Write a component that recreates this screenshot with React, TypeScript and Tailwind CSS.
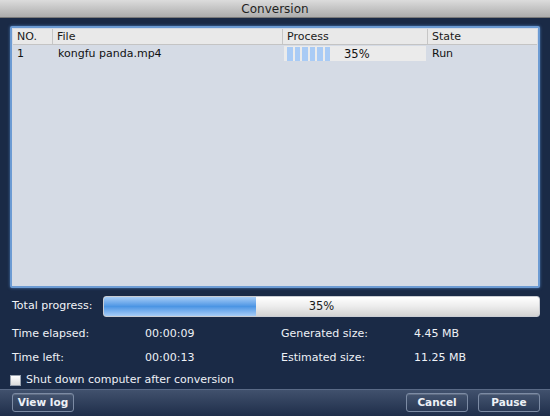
import React from "react";

type Job = { no: number; file: string; progress: number; state: string };

const jobs: Job[] = [{ no: 1, file: "kongfu panda.mp4", progress: 35, state: "Run" }];

const Segments = ({ value }: { value: number }) => {
  const count = Math.round((value / 100) * 17);
  return (
    <div className="flex h-full items-center gap-[2px] pl-[3px]">
      {Array.from({ length: count }).map((_, i) => (
        <div key={i} className="h-[14px] w-[5.5px] bg-[#a9cbf5]" />
      ))}
    </div>
  );
};

const Button = ({ label }: { label: string }) => (
  <button className="h-[19px] w-[62px] rounded-[3px] border border-[#7c8ba4] bg-gradient-to-b from-[#44546f] to-[#2a3955] text-[10.5px] font-bold text-[#eef1f6] shadow-[inset_0_1px_0_rgba(255,255,255,0.15)]">
    {label}
  </button>
);

const Stat = ({ label, value }: { label: string; value: string }) => (
  <div className="flex">
    <span className="w-[133px]">{label}</span>
    <span>{value}</span>
  </div>
);

export default function App() {
  const total = 35;
  return (
    <div className="flex h-[416px] w-[550px] flex-col overflow-hidden bg-[#1a2a46] font-['DejaVu_Sans',sans-serif] text-[11px]">
      {/* title bar */}
      <div className="flex h-[18px] items-center justify-center border-b border-[#7a7a7a] bg-gradient-to-b from-[#dcdcdc] to-[#adadad] text-[12px] text-[#1f1f1f]">
        Conversion
      </div>

      <div className="flex flex-1 flex-col px-[10px] pt-[8px]">
        {/* job list */}
        <div className="h-[262px] rounded-[2px] border-2 border-[#6c9bd3] bg-[#d5dbe5] p-[1px] shadow-[0_0_3px_#4a7ab8]">
          <div className="flex h-[16px] border-b border-[#c4c4c4] bg-[#e9e9e9] text-[#1a1a1a]">
            <div className="w-[40px] border-r border-[#c6c6c6] pl-[4px] leading-[16px]">NO.</div>
            <div className="w-[230px] border-r border-[#c6c6c6] pl-[4px] leading-[16px]">File</div>
            <div className="w-[145px] border-r border-[#c6c6c6] pl-[4px] leading-[16px]">Process</div>
            <div className="flex-1 pl-[4px] leading-[16px]">State</div>
          </div>
          {jobs.map((j) => (
            <div key={j.no} className="flex h-[17px] text-[#111]">
              <div className="w-[40px] pl-[4px] leading-[18px]">{j.no}</div>
              <div className="w-[230px] pl-[5px] leading-[18px]">{j.file}</div>
              <div className="relative my-[1px] ml-[1px] w-[142px] bg-[#ebebeb]">
                <Segments value={j.progress} />
                <span className="absolute left-[60px] top-0 text-[11.5px] leading-[16px]">{j.progress}%</span>
              </div>
              <div className="flex-1 pl-[6px] leading-[18px]">{j.state}</div>
            </div>
          ))}
        </div>

        {/* total progress */}
        <div className="mt-[8px] flex items-center text-[#f2f4f8]">
          <span className="w-[93px] pl-[2px]">Total progress:</span>
          <div className="relative h-[21px] flex-1 overflow-hidden rounded-[3px] border border-[#c9ccd2] bg-gradient-to-b from-[#ffffff] via-[#ececec] to-[#d2d2d2]">
            <div
              className="h-full bg-gradient-to-b from-[#a6ccf6] via-[#4b95e4] to-[#a6ccf6]"
              style={{ width: `${total}%` }}
            />
            <span className="absolute inset-0 flex items-center justify-center text-[11.5px] text-[#1a1a1a]">
              {total}%
            </span>
          </div>
        </div>

        {/* stats */}
        <div className="mt-[9px] grid grid-cols-[269px_1fr] gap-y-[7px] pl-[2px] text-[#eef1f6]">
          <Stat label="Time elapsed:" value="00:00:09" />
          <Stat label="Generated size:" value="4.45 MB" />
          <Stat label="Time left:" value="00:00:13" />
          <Stat label="Estimated size:" value="11.25 MB" />
        </div>

        <label className="mt-[6px] flex items-center gap-[5px] text-[#eef1f6]">
          <span className="h-[11px] w-[11px] border border-[#9aa3b0] bg-gradient-to-b from-white to-[#dcdcdc]" />
          <span className="text-[11px]">Shut down computer after conversion</span>
        </label>
      </div>

      {/* footer */}
      <div className="flex h-[28px] items-center justify-between border-t border-[#5a6a86] bg-gradient-to-b from-[#41516d] to-[#1f2e4a] pl-[12px] pr-[10px]">
        <Button label="View log" />
        <div className="flex gap-[10px]">
          <Button label="Cancel" />
          <Button label="Pause" />
        </div>
      </div>
    </div>
  );
}
